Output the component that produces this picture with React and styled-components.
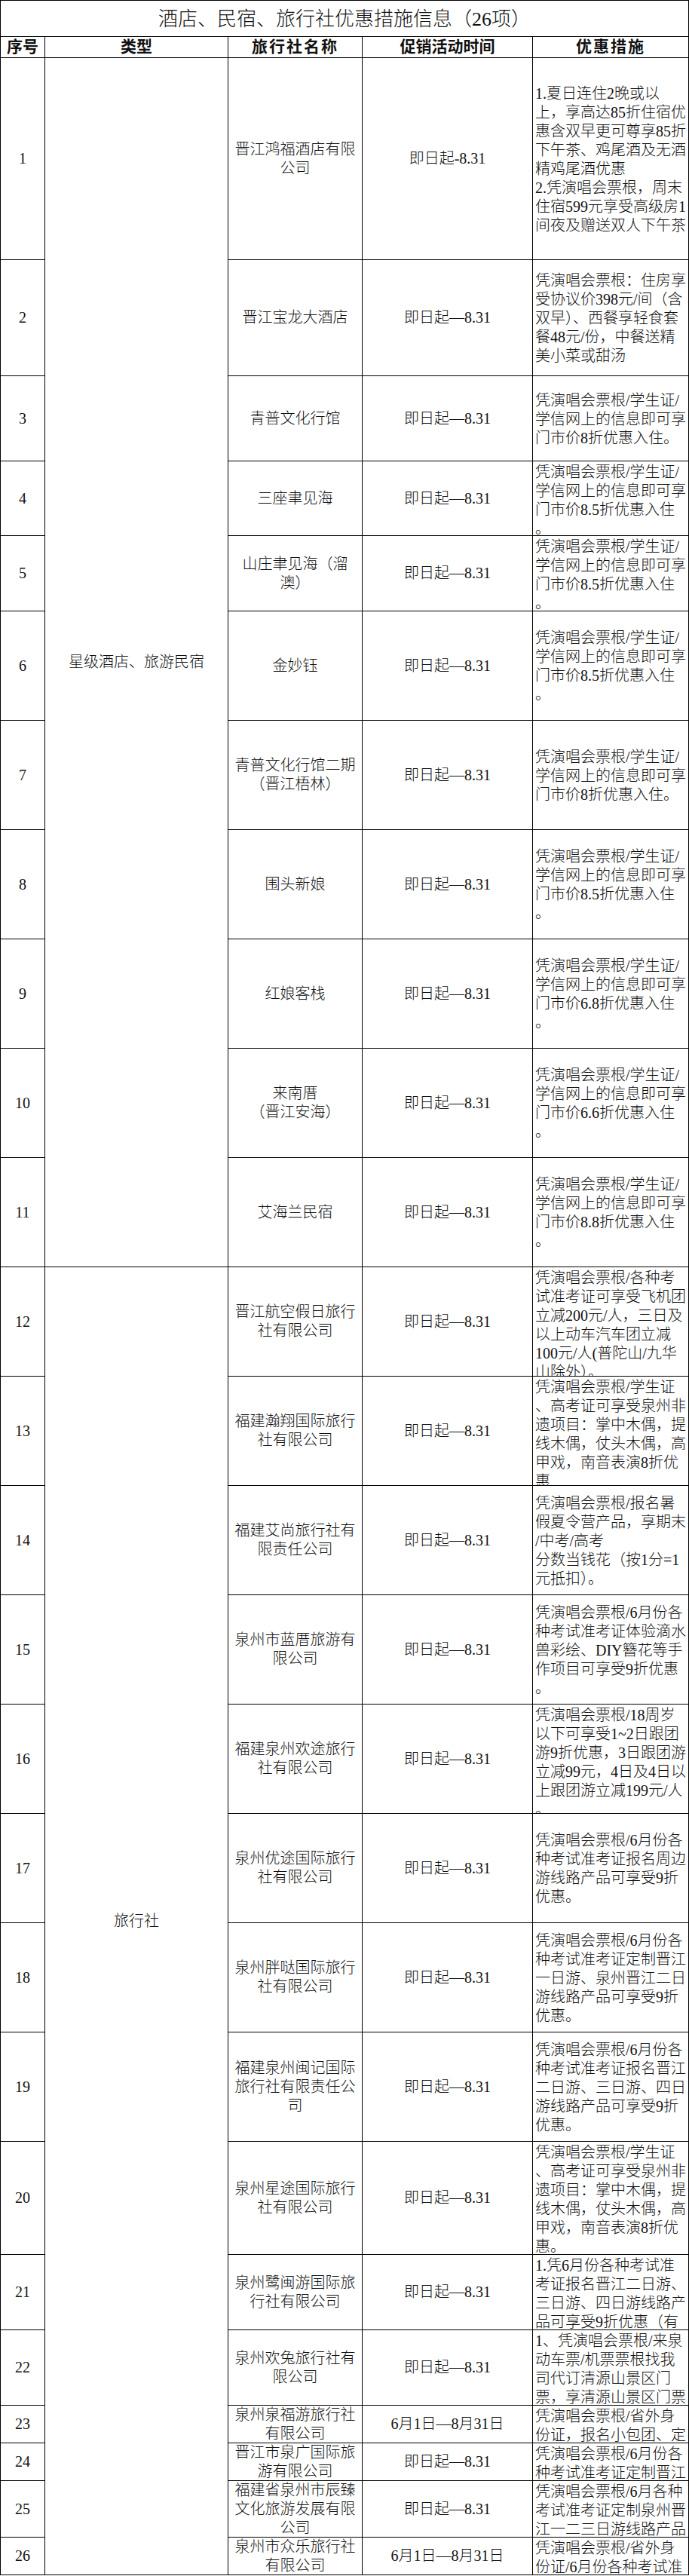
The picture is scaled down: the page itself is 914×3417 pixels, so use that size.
import React from "react";
import styled, { createGlobalStyle } from "styled-components";

const GlobalStyle = createGlobalStyle`
  html, body {
    margin: 0;
    padding: 0;
    background: #fff;
  }
  body {
    font-family: "Liberation Serif", "Noto Sans CJK SC", serif;
    color: #111;
  }
`;

const Sheet = styled.div`
  display: grid;
  grid-template-columns: 58px 242px 177px 225px 206px;
  grid-template-rows: ${(p) => p.$rows};
  gap: 1px;
  padding: 1px;
  width: 914px;
  box-sizing: border-box;
  background: #000;
`;

const Cell = styled.div`
  background: #fff;
  overflow: hidden;
  min-width: 0;
  min-height: 0;
  display: flex;
  flex-direction: column;
  justify-content: safe center;
  align-items: center;
  font-size: 20px;
  line-height: 25px;
  font-weight: 300;
`;

const TitleCell = styled(Cell)`
  grid-column: 1 / -1;
  font-size: 26px;
  line-height: 32px;
  padding-top: 2px;
`;

const HeadCell = styled(Cell)`
  font-size: 21px;
  font-weight: 700;
  letter-spacing: ${(p) => p.$spread || 0}px;
`;

const NumCell = styled(Cell)`
  grid-column: 1;
`;

const TypeCell = styled(Cell)`
  grid-column: 2;
  grid-row: span ${(p) => p.$span};
`;

const NameCell = styled(Cell)`
  grid-column: 3;
  text-align: center;
`;

const TimeCell = styled(Cell)`
  grid-column: 4;
`;

const DescCell = styled(Cell)`
  grid-column: 5;
  align-items: flex-start;
  padding: 2px 0 0 3px;
`;

const Line = styled.span`
  display: block;
  white-space: nowrap;
`;

const st = (rate) => [
  "凭演唱会票根/学生证/",
  "学信网上的信息即可享",
  `门市价${rate}折优惠入住`,
  "。",
];

const st3 = [
  "凭演唱会票根/学生证/",
  "学信网上的信息即可享",
  "门市价8折优惠入住。",
];

const feiyi = (last) => [
  "凭演唱会票根/学生证",
  "、高考证可享受泉州非",
  "遗项目：掌中木偶，提",
  "线木偶，仗头木偶，高",
  "甲戏，南音表演8折优",
  last,
];

const D = "即日起—8.31";
const M = "6月1日—8月31日";

const rows = [
  {
    h: 268,
    name: ["晋江鸿福酒店有限", "公司"],
    time: "即日起-8.31",
    desc: [
      "1.夏日连住2晚或以",
      "上，享高达85折住宿优",
      "惠含双早更可尊享85折",
      "下午茶、鸡尾酒及无酒",
      "精鸡尾酒优惠",
      "2.凭演唱会票根，周末",
      "住宿599元享受高级房1",
      "间夜及赠送双人下午茶",
    ],
  },
  {
    h: 154,
    name: ["晋江宝龙大酒店"],
    time: D,
    desc: [
      "凭演唱会票根：住房享",
      "受协议价398元/间（含",
      "双早）、西餐享轻食套",
      "餐48元/份，中餐送精",
      "美小菜或甜汤",
    ],
  },
  { h: 113, name: ["青普文化行馆"], time: D, desc: st3 },
  { h: 99, name: ["三座聿见海"], time: D, desc: st("8.5") },
  { h: 100, name: ["山庄聿见海（溜", "澳）"], time: D, desc: st("8.5") },
  { h: 145, name: ["金妙钰"], time: D, desc: st("8.5") },
  { h: 145, name: ["青普文化行馆二期", "（晋江梧林）"], time: D, desc: st3 },
  { h: 145, name: ["围头新娘"], time: D, desc: st("8.5") },
  { h: 145, name: ["红娘客栈"], time: D, desc: st("6.8") },
  { h: 145, name: ["来南厝", "（晋江安海）"], time: D, desc: st("6.6") },
  { h: 145, name: ["艾海兰民宿"], time: D, desc: st("8.8") },
  {
    h: 145,
    name: ["晋江航空假日旅行", "社有限公司"],
    time: D,
    desc: [
      "凭演唱会票根/各种考",
      "试准考证可享受飞机团",
      "立减200元/人，三日及",
      "以上动车汽车团立减",
      "100元/人(普陀山/九华",
      "山除外）。",
    ],
  },
  { h: 145, name: ["福建瀚翔国际旅行", "社有限公司"], time: D, desc: feiyi("惠") },
  {
    h: 145,
    name: ["福建艾尚旅行社有", "限责任公司"],
    time: D,
    desc: [
      "凭演唱会票根/报名暑",
      "假夏令营产品，享期末",
      "/中考/高考",
      "分数当钱花（按1分=1",
      "元抵扣）。",
    ],
  },
  {
    h: 145,
    name: ["泉州市蓝厝旅游有", "限公司"],
    time: D,
    desc: [
      "凭演唱会票根/6月份各",
      "种考试准考证体验滴水",
      "兽彩绘、DIY簪花等手",
      "作项目可享受9折优惠",
      "。",
    ],
  },
  {
    h: 145,
    name: ["福建泉州欢途旅行", "社有限公司"],
    time: D,
    desc: [
      "凭演唱会票根/18周岁",
      "以下可享受1~2日跟团",
      "游9折优惠，3日跟团游",
      "立减99元，4日及4日以",
      "上跟团游立减199元/人",
      "。",
    ],
  },
  {
    h: 145,
    name: ["泉州优途国际旅行", "社有限公司"],
    time: D,
    desc: [
      "凭演唱会票根/6月份各",
      "种考试准考证报名周边",
      "游线路产品可享受9折",
      "优惠。",
    ],
  },
  {
    h: 145,
    name: ["泉州胖哒国际旅行", "社有限公司"],
    time: D,
    desc: [
      "凭演唱会票根/6月份各",
      "种考试准考证定制晋江",
      "一日游、泉州晋江二日",
      "游线路产品可享受9折",
      "优惠。",
    ],
  },
  {
    h: 145,
    name: ["福建泉州闽记国际", "旅行社有限责任公", "司"],
    time: D,
    desc: [
      "凭演唱会票根/6月份各",
      "种考试准考证报名晋江",
      "二日游、三日游、四日",
      "游线路产品可享受9折",
      "优惠。",
    ],
  },
  { h: 150, name: ["泉州星途国际旅行", "社有限公司"], time: D, desc: feiyi("惠。") },
  {
    h: 100,
    name: ["泉州鹭闽游国际旅", "行社有限公司"],
    time: D,
    desc: [
      "1.凭6月份各种考试准",
      "考证报名晋江二日游、",
      "三日游、四日游线路产",
      "品可享受9折优惠（有",
    ],
  },
  {
    h: 100,
    name: ["泉州欢兔旅行社有", "限公司"],
    time: D,
    desc: [
      "1、凭演唱会票根/来泉",
      "动车票/机票票根找我",
      "司代订清源山景区门",
      "票，享清源山景区门票",
    ],
  },
  {
    h: 50,
    name: ["泉州泉福游旅行社", "有限公司"],
    time: M,
    desc: ["凭演唱会票根/省外身", "份证，报名小包团、定"],
  },
  {
    h: 50,
    name: ["晋江市泉广国际旅", "游有限公司"],
    time: D,
    desc: ["凭演唱会票根/6月份各", "种考试准考证定制晋江"],
  },
  {
    h: 75,
    name: ["福建省泉州市辰臻", "文化旅游发展有限", "公司"],
    time: D,
    desc: ["凭演唱会票根/6月各种", "考试准考证定制泉州晋", "江一二三日游线路产品"],
  },
  {
    h: 50,
    name: ["泉州市众乐旅行社", "有限公司"],
    time: M,
    desc: ["凭演唱会票根/省外身", "份证/6月份各种考试准"],
  },
];

const groups = [
  { label: "星级酒店、旅游民宿", from: 0, count: 11 },
  { label: "旅行社", from: 11, count: 15 },
];

const tracks = [48, 28, ...rows.map((r) => r.h)].map((h) => `${h - 1}px`).join(" ");

const lines = (arr) => arr.map((t, i) => <Line key={i}>{t}</Line>);

export default function App() {
  return (
    <>
      <GlobalStyle />
      <Sheet $rows={tracks}>
        <TitleCell>酒店、民宿、旅行社优惠措施信息（26项）</TitleCell>
        <HeadCell>序号</HeadCell>
        <HeadCell>类型</HeadCell>
        <HeadCell $spread={2}>旅行社名称</HeadCell>
        <HeadCell>促销活动时间</HeadCell>
        <HeadCell $spread={2}>优惠措施</HeadCell>
        {rows.map((r, i) => {
          const g = groups.find((x) => x.from === i);
          return (
            <React.Fragment key={i}>
              <NumCell>{i + 1}</NumCell>
              {g && <TypeCell $span={g.count}>{g.label}</TypeCell>}
              <NameCell>{lines(r.name)}</NameCell>
              <TimeCell>{r.time}</TimeCell>
              <DescCell>{lines(r.desc)}</DescCell>
            </React.Fragment>
          );
        })}
      </Sheet>
    </>
  );
}
